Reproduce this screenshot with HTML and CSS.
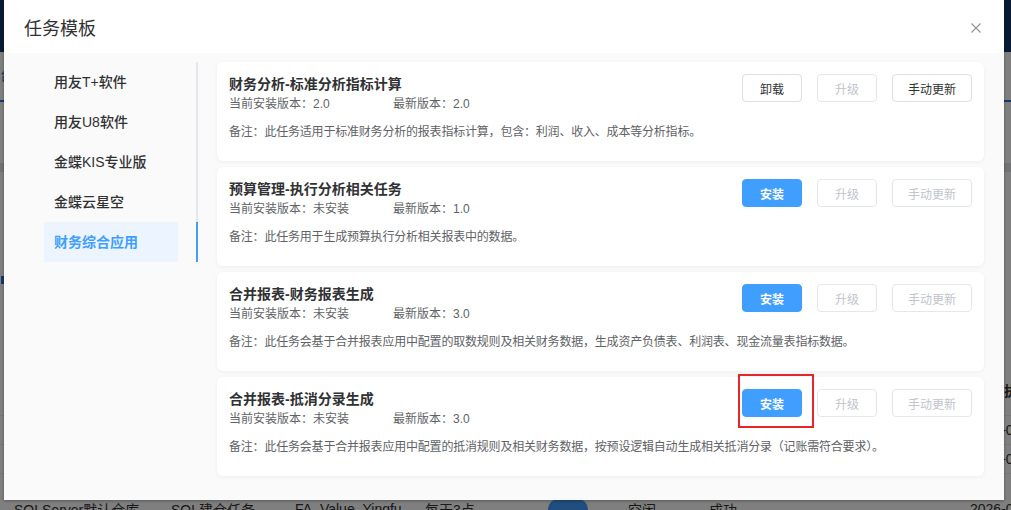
FILE: index.html
```html
<!DOCTYPE html>
<html lang="zh-CN">
<head>
<meta charset="utf-8">
<title>任务模板</title>
<link rel="stylesheet" href="styles.css">
</head>
<body>
<div class="app">
  <header class="app-header"></header>
  <nav class="app-tabs"><span class="app-tab">后台</span></nav>
  <div class="app-gap"></div>
  <div class="app-band"></div>
  <div class="app-panel">
    <div class="app-panel-title"></div>
  </div>
  <section class="app-table">
    <div class="app-row app-thead">
      <span></span><span></span><span></span><span></span><span></span><span></span><span></span><span class="th-last">执行时间</span>
    </div>
    <div class="app-row app-row-sm">
      <span></span><span></span><span></span><span></span><span></span><span></span><span></span><span>2026-01-08 03:00:01</span>
    </div>
    <div class="app-row app-row-sm">
      <span></span><span></span><span></span><span></span><span></span><span></span><span></span><span>2026-01-07 03:00:01</span>
    </div>
    <div class="app-row app-row-lg">
      <span>SQLServer默认仓库</span><span>SQL建仓任务</span><span>FA_Value_Yingfu</span><span>每天3点</span><span><i class="switch"></i></span><span>空闲</span><span>成功</span><span>2026-01-06 03:00:01</span>
    </div>
  </section>
</div>

<div class="mask"></div>

<div class="dialog">
  <div class="dialog-header">
    <div class="dialog-title">任务模板</div>
    <svg class="dialog-close" viewBox="0 0 10 10" aria-label="关闭">
      <path d="M0.5 0.5 L9.5 9.5 M9.5 0.5 L0.5 9.5" stroke="#909399" stroke-width="1.1" fill="none"/>
    </svg>
  </div>
  <div class="dialog-body">
    <ul class="side-nav">
      <li class="side-item">用友T+软件</li>
      <li class="side-item">用友U8软件</li>
      <li class="side-item">金蝶KIS专业版</li>
      <li class="side-item">金蝶云星空</li>
      <li class="side-item active">财务综合应用</li>
    </ul>
    <div class="task-list">
      <div class="task-card">
        <div class="task-head">
          <div class="task-info">
            <div class="task-title">财务分析-标准分析指标计算</div>
            <div class="task-meta"><span class="cur">当前安装版本：2.0</span><span>最新版本：2.0</span></div>
          </div>
          <div class="task-actions">
            <button class="btn">卸载</button>
            <button class="btn btn-disabled">升级</button>
            <button class="btn btn-wide">手动更新</button>
          </div>
        </div>
        <div class="task-note">备注：此任务适用于标准财务分析的报表指标计算，包含：利润、收入、成本等分析指标。</div>
      </div>

      <div class="task-card">
        <div class="task-head">
          <div class="task-info">
            <div class="task-title">预算管理-执行分析相关任务</div>
            <div class="task-meta"><span class="cur">当前安装版本：未安装</span><span>最新版本：1.0</span></div>
          </div>
          <div class="task-actions">
            <button class="btn btn-primary">安装</button>
            <button class="btn btn-disabled">升级</button>
            <button class="btn btn-wide btn-disabled">手动更新</button>
          </div>
        </div>
        <div class="task-note">备注：此任务用于生成预算执行分析相关报表中的数据。</div>
      </div>

      <div class="task-card">
        <div class="task-head">
          <div class="task-info">
            <div class="task-title">合并报表-财务报表生成</div>
            <div class="task-meta"><span class="cur">当前安装版本：未安装</span><span>最新版本：3.0</span></div>
          </div>
          <div class="task-actions">
            <button class="btn btn-primary">安装</button>
            <button class="btn btn-disabled">升级</button>
            <button class="btn btn-wide btn-disabled">手动更新</button>
          </div>
        </div>
        <div class="task-note">备注：此任务会基于合并报表应用中配置的取数规则及相关财务数据，生成资产负债表、利润表、现金流量表指标数据。</div>
      </div>

      <div class="task-card">
        <div class="task-head">
          <div class="task-info">
            <div class="task-title">合并报表-抵消分录生成</div>
            <div class="task-meta"><span class="cur">当前安装版本：未安装</span><span>最新版本：3.0</span></div>
          </div>
          <div class="task-actions">
            <button class="btn btn-primary">安装<span class="highlight"></span></button>
            <button class="btn btn-disabled">升级</button>
            <button class="btn btn-wide btn-disabled">手动更新</button>
          </div>
        </div>
        <div class="task-note">备注：此任务会基于合并报表应用中配置的抵消规则及相关财务数据，按预设逻辑自动生成相关抵消分录（记账需符合要求）。</div>
      </div>
    </div>
  </div>
</div>
</body>
</html>
```

FILE: styles.css
```css
* { box-sizing: border-box; }

html, body { margin: 0; padding: 0; }

body {
  width: 1011px;
  height: 510px;
  overflow: hidden;
  position: relative;
  background: #fff;
  font-family: "Liberation Sans", "Noto Sans CJK SC", sans-serif;
  color: #303133;
}

/* ---------- background application ---------- */
.app { width: 1011px; }

.app-header { height: 52px; background: #163468; }

.app-tabs {
  height: 50px;
  border-bottom: 2px solid #2f6fd0;
  padding-top: 12px;
  font-size: 14px;
  color: #2f6fd0;
  overflow: hidden;
  text-indent: -14px;
}

.app-gap { height: 61px; }

.app-band { height: 9px; background: #e4e6ea; }

.app-panel { height: 108px; padding-top: 104px; }

.app-panel-title {
  height: 8px;
  width: 3px;
  margin-left: 1px;
  background: #2f6fd0;
}

.app-table { margin-top: 84px; font-size: 14px; color: #303133; }

.app-row {
  display: grid;
  grid-template-columns: 157px 124px 130px 126px 77px 81px 261px 1fr;
  padding-left: 14px;
  border-bottom: 1px solid #ebeef5;
  align-items: center;
  white-space: nowrap;
}

.app-thead { height: 52px; font-weight: 700; color: #303133; }
.app-thead .th-last { padding-left: 34px; }
.app-row-sm { height: 29px; }
.app-row-lg { height: 70px; }

.switch {
  display: block;
  width: 40px;
  height: 20px;
  border-radius: 10px;
  background: #409eff;
  margin-left: -3px;
}

.mask {
  position: absolute;
  inset: 0;
  background: rgba(0, 0, 0, 0.5);
}

/* ---------- dialog ---------- */
.dialog {
  position: absolute;
  left: 4px;
  top: 0;
  width: 1000px;
  height: 500px;
  background: #fafafa;
  display: flex;
  flex-direction: column;
  box-shadow: 0 1px 3px rgba(0, 0, 0, 0.3);
}

.dialog-header {
  height: 53px;
  flex: none;
  background: #fff;
  display: flex;
  align-items: center;
  justify-content: space-between;
  padding: 3px 23px 0 20px;
}

.dialog-title {
  font-size: 18px;
  line-height: 24px;
  color: #303133;
  margin-top: 2px;
}

.dialog-close { width: 10px; height: 10px; display: block; }

.dialog-body {
  flex: 1;
  display: flex;
  align-items: flex-start;
  padding: 9px 20px 0 40px;
}

.side-nav {
  list-style: none;
  margin: 0;
  padding: 0 18px 0 0;
  width: 154px;
  flex: none;
  border-right: 2px solid #e4e7ed;
}

.side-item {
  position: relative;
  height: 40px;
  line-height: 40px;
  padding-left: 10px;
  font-size: 14px;
  font-weight: 500;
  color: #303133;
  white-space: nowrap;
}

.side-item.active {
  background: #ecf5ff;
  color: #409eff;
  font-weight: 700;
}

.side-item.active::after {
  content: "";
  position: absolute;
  top: 0;
  bottom: 0;
  right: -20px;
  width: 2px;
  background: #409eff;
}

.task-list {
  flex: 1;
  margin-left: 19px;
  display: flex;
  flex-direction: column;
  gap: 6px;
}

.task-card {
  background: #fff;
  border-radius: 6px;
  padding: 12px 12px 19px;
  box-shadow: 0 1px 4px rgba(0, 0, 0, 0.05);
}

.task-head {
  display: flex;
  justify-content: space-between;
  align-items: flex-start;
}

.task-title {
  font-size: 14px;
  line-height: 20px;
  font-weight: 700;
  color: #303133;
}

.task-meta {
  display: flex;
  font-size: 12px;
  line-height: 20px;
  color: #606266;
}

.task-meta .cur { width: 164px; }

.task-actions { display: flex; gap: 15px; }

.btn {
  position: relative;
  width: 60px;
  height: 28px;
  padding: 0;
  border: 1px solid #dcdfe6;
  border-radius: 4px;
  background: #fff;
  font-family: inherit;
  font-size: 12px;
  color: #303133;
  display: flex;
  align-items: center;
  justify-content: center;
}

.btn-wide { width: 80px; }

.btn-primary {
  background: #409eff;
  border-color: #409eff;
  color: #fff;
  font-weight: 700;
}

.btn-disabled {
  color: #c0c4cc;
  border-color: #e4e7ed;
}

.highlight {
  position: absolute;
  left: -5px;
  top: -16px;
  width: 76px;
  height: 54px;
  border: 2px solid #e5262b;
}

.task-note {
  margin-top: 8px;
  font-size: 12px;
  line-height: 20px;
  color: #606266;
  letter-spacing: -0.2px;
  white-space: nowrap;
}
```
